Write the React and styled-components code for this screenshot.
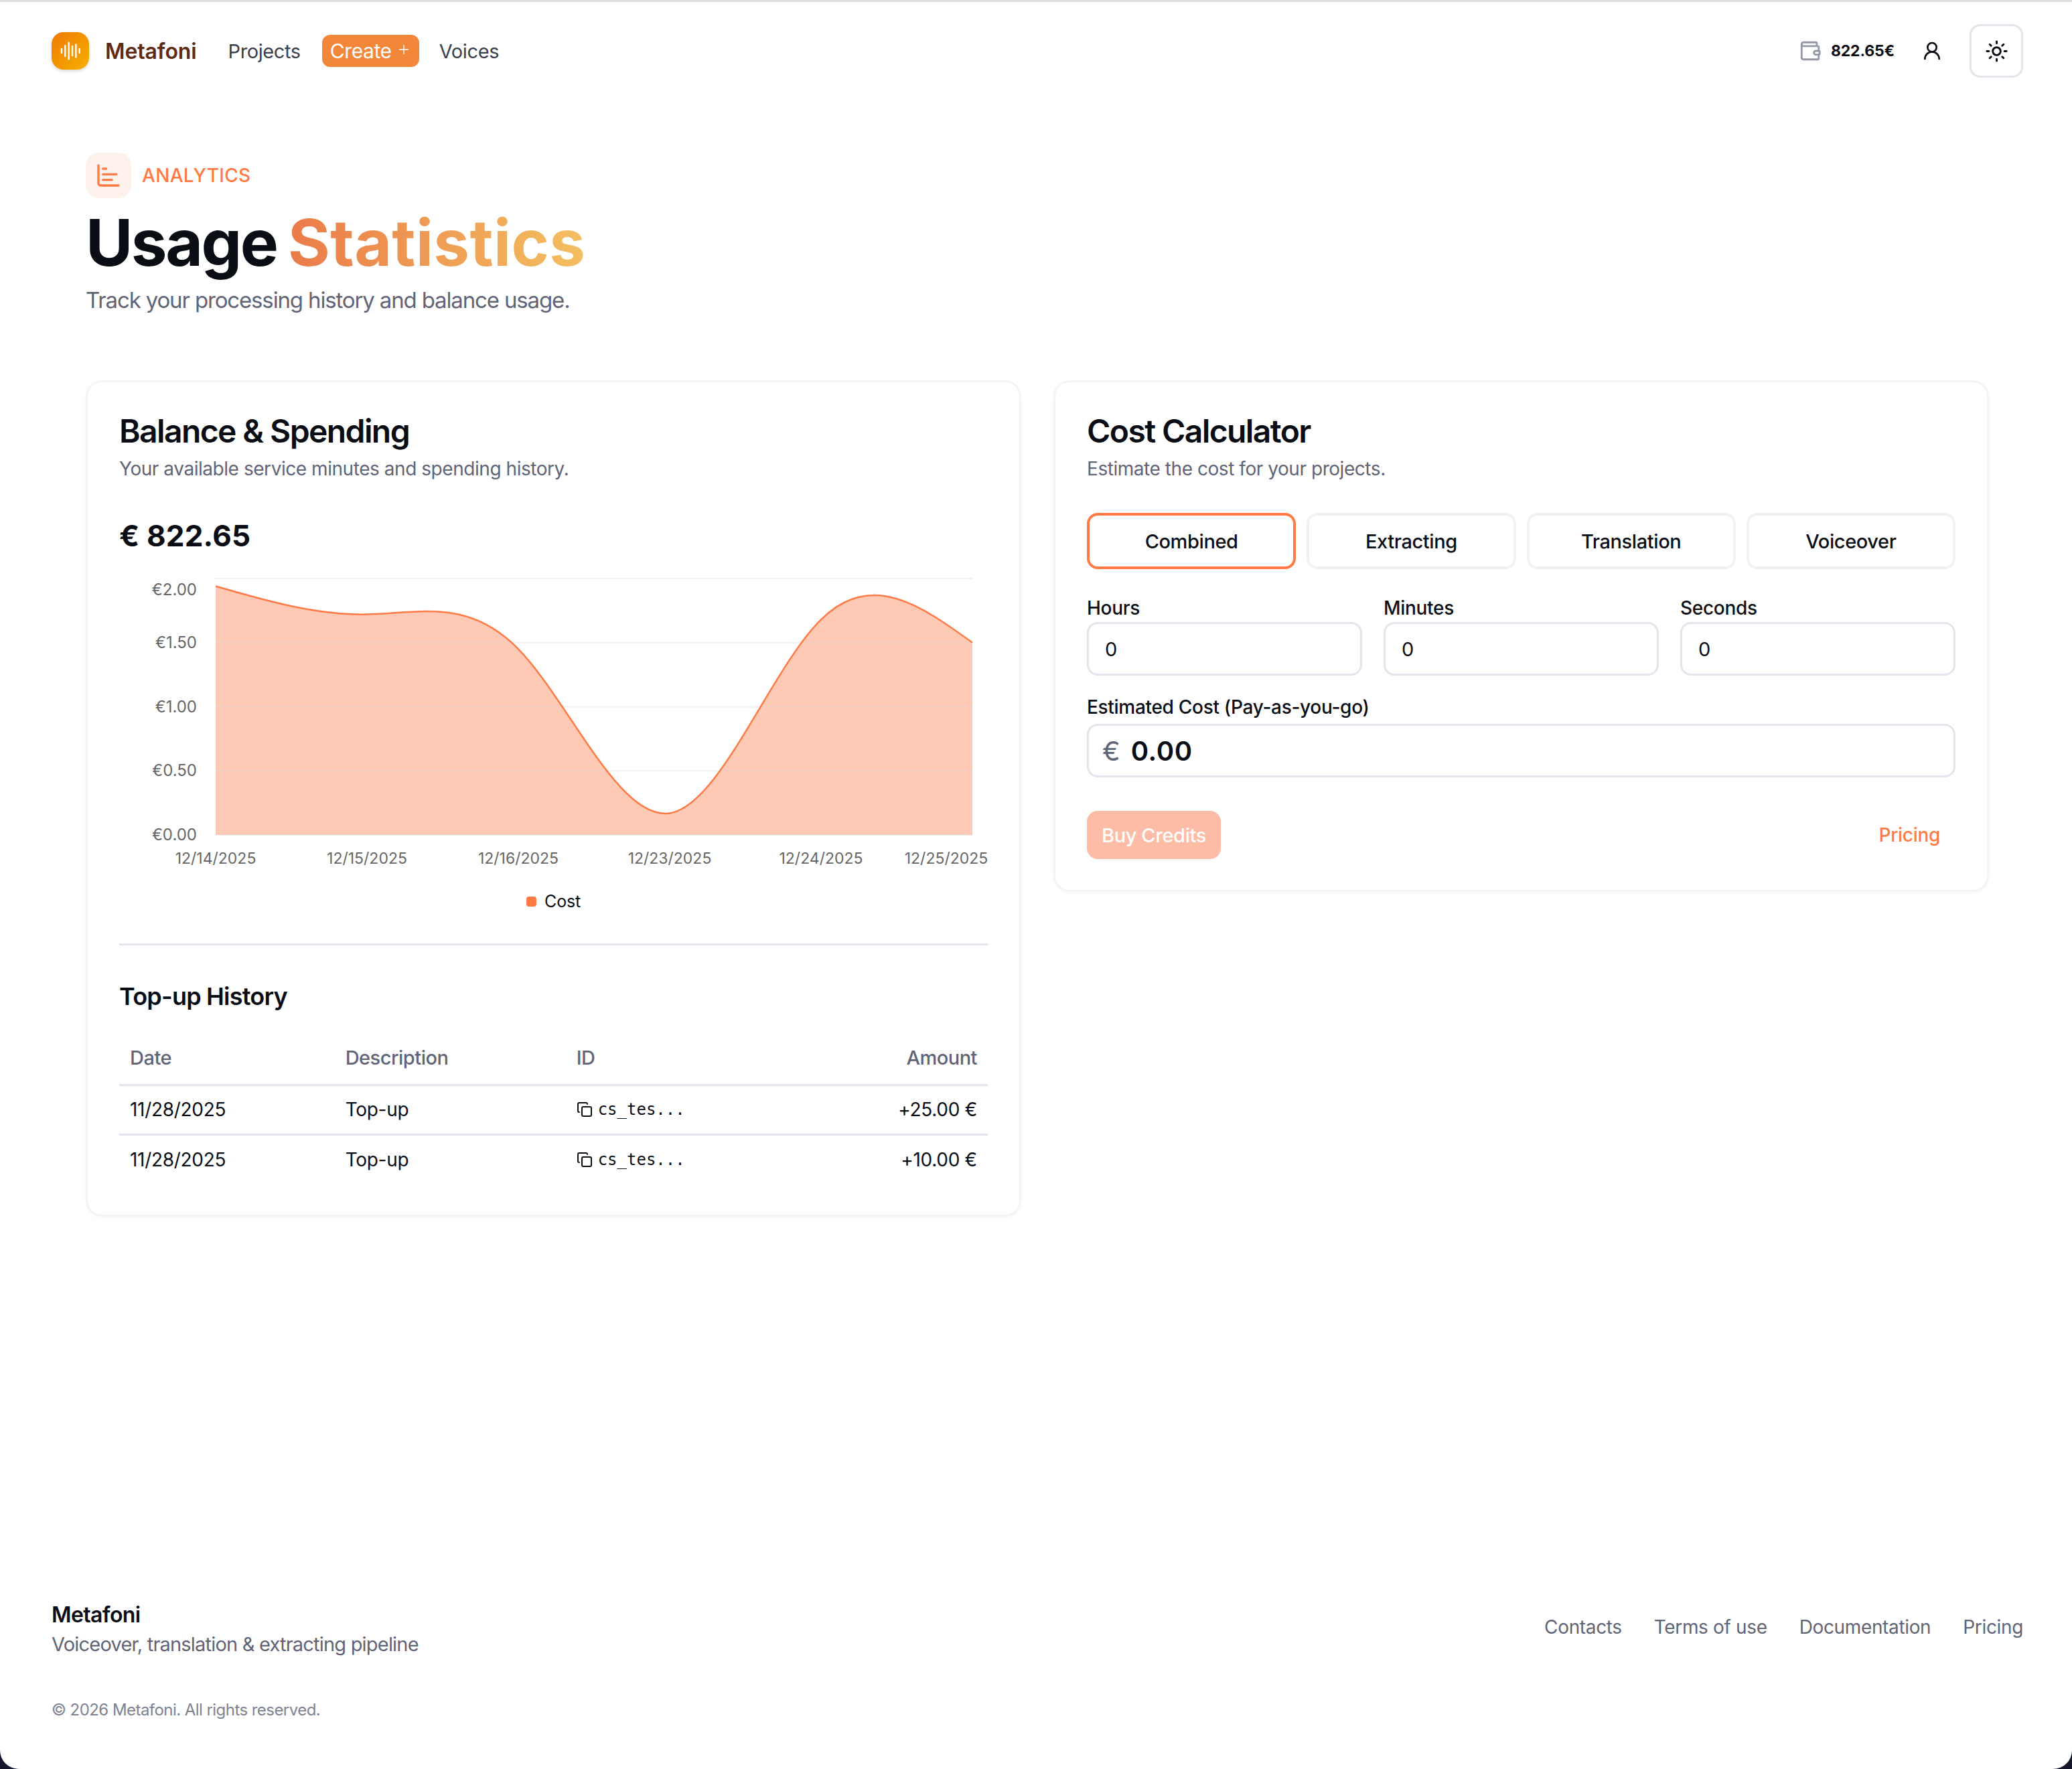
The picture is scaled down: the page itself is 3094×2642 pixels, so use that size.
import React from "react";
import styled, { createGlobalStyle } from "styled-components";
import { Wallet, UserRound, Sun, Copy, ChartBar, Plus } from "lucide-react";

const GlobalStyle = createGlobalStyle`
  html, body {
    margin: 0;
    padding: 0;
    background: #14172b;
  }
  * {
    box-sizing: border-box;
  }
`;

const Page = styled.div`
  min-height: 2642px;
  display: flex;
  flex-direction: column;
  background: #ffffff;
  border-top: 3px solid #e0e0e0;
  border-radius: 0 0 28px 28px;
  font-family: Inter, "Noto Sans", sans-serif;
  color: #0a0d14;
`;

const Header = styled.header`
  display: flex;
  align-items: center;
  justify-content: space-between;
  padding: 33px 73px 0 77px;
`;

const Cluster = styled.div`
  display: flex;
  align-items: center;
`;

const LogoBadge = styled.div`
  width: 56px;
  height: 56px;
  display: flex;
  align-items: center;
  justify-content: center;
  border-radius: 18px;
  background: linear-gradient(135deg, #f07a05, #f5b000);
  box-shadow: 0 2px 5px rgba(0, 0, 0, 0.16);
`;

const Brand = styled.span`
  margin-left: 24px;
  font-size: 32px;
  font-weight: 600;
  letter-spacing: -0.1px;
  color: #5f2a14;
`;

const NavLink = styled.a`
  margin-left: ${(p) => p.$gap}px;
  font-size: 29px;
  letter-spacing: -0.4px;
  color: #3b3f4c;
`;

const CreateButton = styled.button`
  display: flex;
  align-items: center;
  gap: 7px;
  width: 145px;
  height: 48px;
  margin-left: 32px;
  padding: 0 12px;
  border: 0;
  border-radius: 12px;
  background: #f2873a;
  color: #ffffff;
  font: 400 30px Inter, sans-serif;
  letter-spacing: -0.4px;
  svg {
    margin-top: -5px;
  }
`;

const BalanceChip = styled.div`
  display: flex;
  align-items: center;
  gap: 14px;
  font-size: 23px;
  font-weight: 700;
  letter-spacing: -0.2px;
  color: #9499a8;
  span {
    color: #0a0d14;
  }
`;

const UserButton = styled.div`
  display: flex;
  margin: 0 40px 0 40px;
  color: #0a0d14;
`;

const ThemeButton = styled.button`
  width: 80px;
  height: 80px;
  display: flex;
  align-items: center;
  justify-content: center;
  background: #ffffff;
  border: 3px solid #e4e5ec;
  border-radius: 16px;
  color: #0a0d14;
`;

const Main = styled.main`
  padding: 112px 124px 0 128px;
`;

const Eyebrow = styled.div`
  display: flex;
  align-items: center;
  gap: 16px;
  font-size: 28px;
  font-weight: 500;
  letter-spacing: 0.3px;
  color: #ff7a45;
`;

const EyebrowIcon = styled.div`
  width: 68px;
  height: 68px;
  display: flex;
  align-items: center;
  justify-content: center;
  border-radius: 20px;
  background: #fdf1ec;
`;

const Title = styled.h1`
  margin: 12px 0 0;
  font-size: 96px;
  line-height: 108px;
  font-weight: 700;
  letter-spacing: -2.4px;
  word-spacing: -4px;
  color: #0a0d14;
`;

const Gradient = styled.span`
  background: linear-gradient(90deg, #ea7b4a, #f4bf60);
  -webkit-background-clip: text;
  background-clip: text;
  color: transparent;
  letter-spacing: 0.4px;
`;

const Subtitle = styled.p`
  margin: 8px 0 0;
  font-size: 33px;
  line-height: 48px;
  letter-spacing: -1.15px;
  color: #5f6476;
`;

const Columns = styled.div`
  display: grid;
  grid-template-columns: minmax(0, 1fr) minmax(0, 1fr);
  gap: 48px;
  align-items: start;
  margin-top: 96px;
`;

const Card = styled.section`
  padding: 43px 47px 46px;
  border: 3px solid #f3f4f7;
  border-radius: 24px;
  box-shadow: 0 2px 4px rgba(16, 20, 40, 0.03);
`;

const CardTitle = styled.h2`
  margin: 0;
  font-size: 48px;
  line-height: 60px;
  font-weight: 600;
  letter-spacing: -1.6px;
`;

const CardSub = styled.p`
  margin: 6px 0 0;
  font-size: 28px;
  line-height: 40px;
  letter-spacing: -0.45px;
  color: #5f6476;
`;

const BalanceValue = styled.div`
  margin-top: 50px;
  font-size: 44px;
  line-height: 60px;
  font-weight: 700;
  letter-spacing: 0.2px;
`;

const ChartSvg = styled.svg`
  display: block;
  width: 1297px;
  height: 456px;
  margin-top: 22px;
  text {
    font-family: Inter, sans-serif;
    font-size: 24px;
    fill: #666666;
  }
  text.date {
    font-size: 23px;
  }
`;

const Legend = styled.div`
  display: flex;
  align-items: center;
  justify-content: center;
  gap: 12px;
  margin-top: 20px;
  font-size: 25px;
  line-height: 36px;
  letter-spacing: -0.2px;
`;

const LegendDot = styled.i`
  width: 15px;
  height: 15px;
  border-radius: 4px;
  background: #ff7a45;
`;

const Divider = styled.hr`
  margin: 45px 0 0;
  border: 0;
  border-top: 3px solid #e4e5ec;
`;

const SectionTitle = styled.h3`
  margin: 52px 0 0;
  font-size: 36px;
  line-height: 48px;
  font-weight: 600;
  letter-spacing: -0.8px;
`;

const Table = styled.table`
  width: 100%;
  margin-top: 34px;
  border-collapse: collapse;
  font-size: 28px;
  letter-spacing: -0.3px;
`;

const Th = styled.th`
  height: 74px;
  padding: 0 16px 6px;
  font-size: 29px;
  font-weight: 500;
  letter-spacing: -0.5px;
  text-align: ${(p) => (p.$right ? "right" : "left")};
  color: #5f6476;
  border-bottom: 3px solid #e4e5ec;
`;

const Td = styled.td`
  height: 74px;
  padding: 0 16px;
  text-align: ${(p) => (p.$right ? "right" : "left")};
  border-top: ${(p) => (p.$first ? "0" : "3px solid #e4e5ec")};
`;

const IdCell = styled.div`
  display: flex;
  align-items: center;
  gap: 8px;
  font-family: "DejaVu Sans Mono", "Liberation Mono", monospace;
  font-size: 24px;
  letter-spacing: 0;
`;

const Tabs = styled.div`
  display: grid;
  grid-template-columns: repeat(4, 1fr);
  gap: 16px;
  margin-top: 46px;
`;

const Tab = styled.button`
  height: 84px;
  background: #ffffff;
  border: 4px solid ${(p) => (p.$active ? "#ff7a45" : "#f1f2f6")};
  border-radius: 16px;
  color: #0a0d14;
  font: 500 29px Inter, sans-serif;
  letter-spacing: -0.4px;
`;

const TimeRow = styled.div`
  display: grid;
  grid-template-columns: repeat(3, 1fr);
  gap: 32px;
  margin-top: 40px;
`;

const FieldLabel = styled.div`
  font-size: 28px;
  line-height: 36px;
  font-weight: 500;
  letter-spacing: -0.3px;
`;

const Box = styled.div`
  display: flex;
  align-items: center;
  height: 80px;
  margin-top: ${(p) => p.$gap}px;
  padding: 0 24px;
  border: 3px solid #e4e5ec;
  border-radius: 16px;
  font-size: 29px;
`;

const CostField = styled.div`
  margin-top: 29px;
`;

const Euro = styled.span`
  margin: 0 16px 0 -4px;
  font-size: 40px;
  color: #5f6476;
`;

const CostValue = styled.span`
  font-size: 40px;
  font-weight: 600;
  letter-spacing: 0.6px;
`;

const Actions = styled.div`
  display: flex;
  align-items: center;
  justify-content: space-between;
  margin-top: 50px;
  padding-right: 23px;
`;

const BuyButton = styled.button`
  width: 200px;
  height: 72px;
  border: 0;
  border-radius: 16px;
  background: #fdbca5;
  color: #ffffff;
  font: 500 29px Inter, sans-serif;
  letter-spacing: -0.4px;
`;

const PricingLink = styled.a`
  font-size: 28px;
  font-weight: 500;
  letter-spacing: -0.3px;
  color: #ff7a45;
`;

const Footer = styled.footer`
  margin-top: auto;
  padding: 0 73px 70px 77px;
`;

const FooterTop = styled.div`
  display: flex;
  align-items: center;
  justify-content: space-between;
`;

const FooterBrand = styled.div`
  font-size: 32px;
  line-height: 44px;
  font-weight: 600;
  letter-spacing: -0.6px;
`;

const FooterTag = styled.div`
  font-size: 29px;
  line-height: 44px;
  letter-spacing: -0.8px;
  color: #5f6476;
`;

const FooterLinks = styled.nav`
  display: flex;
  gap: 48px;
  margin-bottom: 8px;
  font-size: 28px;
  letter-spacing: -0.35px;
  color: #5f6476;
`;

const Copyright = styled.div`
  margin-top: 58px;
  font-size: 24px;
  line-height: 36px;
  letter-spacing: -0.55px;
  color: #7d8291;
`;

// same curve recharts draws for type="natural"
function naturalPath(pts) {
  const n = pts.length - 1;
  const solve = (v) => {
    const a = [], b = [], r = [];
    a[0] = 0; b[0] = 2; r[0] = v[0] + 2 * v[1];
    for (let i = 1; i < n - 1; i++) {
      a[i] = 1; b[i] = 4; r[i] = 4 * v[i] + 2 * v[i + 1];
    }
    a[n - 1] = 2; b[n - 1] = 7; r[n - 1] = 8 * v[n - 1] + v[n];
    for (let i = 1; i < n; i++) {
      const m = a[i] / b[i - 1];
      b[i] -= m;
      r[i] -= m * r[i - 1];
    }
    const c1 = [];
    c1[n - 1] = r[n - 1] / b[n - 1];
    for (let i = n - 2; i >= 0; i--) c1[i] = (r[i] - c1[i + 1]) / b[i];
    const c2 = [];
    c2[n - 1] = (v[n] + c1[n - 1]) / 2;
    for (let i = 0; i < n - 1; i++) c2[i] = 2 * v[i + 1] - c1[i + 1];
    return [c1, c2];
  };
  const [x1, x2] = solve(pts.map((p) => p[0]));
  const [y1, y2] = solve(pts.map((p) => p[1]));
  let d = `M${pts[0][0]},${pts[0][1]}`;
  for (let i = 0; i < n; i++) {
    d += `C${x1[i]},${y1[i]} ${x2[i]},${y2[i]} ${pts[i + 1][0]},${pts[i + 1][1]}`;
  }
  return d;
}

const LEFT = 144;
const STEP = 226;
const BASE = 395;
const values = [1.94, 1.72, 1.45, 0.17, 1.68, 1.5];
const points = values.map((v, i) => [LEFT + i * STEP, BASE - v * 191.5]);
const linePath = naturalPath(points);
const yTicks = [
  { label: "€2.00", value: 2, dy: 25 },
  { label: "€1.50", value: 1.5, dy: 8 },
  { label: "€1.00", value: 1, dy: 8 },
  { label: "€0.50", value: 0.5, dy: 8 },
  { label: "€0.00", value: 0, dy: 8 },
];
const xTicks = [
  { label: "12/14/2025", x: 144 },
  { label: "12/15/2025", x: 370 },
  { label: "12/16/2025", x: 596 },
  { label: "12/23/2025", x: 822 },
  { label: "12/24/2025", x: 1048 },
  { label: "12/25/2025", x: 1235 },
];

const SpendingChart = () => (
  <ChartSvg viewBox="0 0 1297 456">
    <path d={`${linePath}L1274,${BASE}L144,${BASE}Z`} fill="#ff7a45" fillOpacity="0.4" />
    {yTicks.map((t) => (
      <line
        key={t.label}
        x1={LEFT}
        x2="1274"
        y1={BASE - t.value * 191.5}
        y2={BASE - t.value * 191.5}
        stroke="#d8d8d8"
        strokeOpacity="0.35"
        strokeWidth="2"
      />
    ))}
    <path d={linePath} fill="none" stroke="#ff7a45" strokeWidth="2.5" />
    {yTicks.map((t) => (
      <text key={t.label} x="116" y={BASE - t.value * 191.5 + t.dy} textAnchor="end">
        {t.label}
      </text>
    ))}
    {xTicks.map((t) => (
      <text key={t.label} className="date" x={t.x} y="438" textAnchor="middle">
        {t.label}
      </text>
    ))}
  </ChartSvg>
);

const LogoIcon = () => (
  <svg width="32" height="32" viewBox="0 0 32 32" stroke="#fff" strokeWidth="2.4" strokeLinecap="round">
    <path d="M3 13v6M8.3 8v16M13.7 3.5v25M19 9v14M24.4 6.5v19M29.7 13v6" />
  </svg>
);

const rows = [
  { date: "11/28/2025", amount: "+25.00 €" },
  { date: "11/28/2025", amount: "+10.00 €" },
];

export default function App() {
  return (
    <Page>
      <GlobalStyle />
      <Header>
        <Cluster>
          <LogoBadge>
            <LogoIcon />
          </LogoBadge>
          <Brand>Metafoni</Brand>
          <NavLink $gap={47}>Projects</NavLink>
          <CreateButton>
            Create
            <Plus size={24} strokeWidth={1.5} />
          </CreateButton>
          <NavLink $gap={30}>Voices</NavLink>
        </Cluster>
        <Cluster>
          <BalanceChip>
            <Wallet size={34} strokeWidth={2} />
            <span>822.65€</span>
          </BalanceChip>
          <UserButton>
            <UserRound size={32} strokeWidth={2} />
          </UserButton>
          <ThemeButton>
            <Sun size={35} strokeWidth={2} />
          </ThemeButton>
        </Cluster>
      </Header>

      <Main>
        <Eyebrow>
          <EyebrowIcon>
            <ChartBar size={40} strokeWidth={2} />
          </EyebrowIcon>
          ANALYTICS
        </Eyebrow>
        <Title>
          Usage <Gradient>Statistics</Gradient>
        </Title>
        <Subtitle>Track your processing history and balance usage.</Subtitle>

        <Columns>
          <Card>
            <CardTitle>Balance &amp; Spending</CardTitle>
            <CardSub>Your available service minutes and spending history.</CardSub>
            <BalanceValue>€ 822.65</BalanceValue>
            <SpendingChart />
            <Legend>
              <LegendDot />
              Cost
            </Legend>
            <Divider />
            <SectionTitle>Top-up History</SectionTitle>
            <Table>
              <thead>
                <tr>
                  <Th style={{ width: "24.8%" }}>Date</Th>
                  <Th style={{ width: "26.6%" }}>Description</Th>
                  <Th>ID</Th>
                  <Th $right>Amount</Th>
                </tr>
              </thead>
              <tbody>
                {rows.map((r, i) => (
                  <tr key={r.amount}>
                    <Td $first={i === 0}>{r.date}</Td>
                    <Td $first={i === 0}>Top-up</Td>
                    <Td $first={i === 0}>
                      <IdCell>
                        <Copy size={24} strokeWidth={2} />
                        cs_tes...
                      </IdCell>
                    </Td>
                    <Td $first={i === 0} $right>
                      {r.amount}
                    </Td>
                  </tr>
                ))}
              </tbody>
            </Table>
          </Card>

          <Card>
            <CardTitle>Cost Calculator</CardTitle>
            <CardSub>Estimate the cost for your projects.</CardSub>
            <Tabs>
              <Tab $active>Combined</Tab>
              <Tab>Extracting</Tab>
              <Tab>Translation</Tab>
              <Tab>Voiceover</Tab>
            </Tabs>
            <TimeRow>
              {["Hours", "Minutes", "Seconds"].map((name) => (
                <div key={name}>
                  <FieldLabel>{name}</FieldLabel>
                  <Box $gap={3}>0</Box>
                </div>
              ))}
            </TimeRow>
            <CostField>
              <FieldLabel>Estimated Cost (Pay-as-you-go)</FieldLabel>
              <Box $gap={7}>
                <Euro>€</Euro>
                <CostValue>0.00</CostValue>
              </Box>
            </CostField>
            <Actions>
              <BuyButton>Buy Credits</BuyButton>
              <PricingLink>Pricing</PricingLink>
            </Actions>
          </Card>
        </Columns>
      </Main>

      <Footer>
        <FooterTop>
          <div>
            <FooterBrand>Metafoni</FooterBrand>
            <FooterTag>Voiceover, translation &amp; extracting pipeline</FooterTag>
          </div>
          <FooterLinks>
            <span>Contacts</span>
            <span>Terms of use</span>
            <span>Documentation</span>
            <span>Pricing</span>
          </FooterLinks>
        </FooterTop>
        <Copyright>© 2026 Metafoni. All rights reserved.</Copyright>
      </Footer>
    </Page>
  );
}
